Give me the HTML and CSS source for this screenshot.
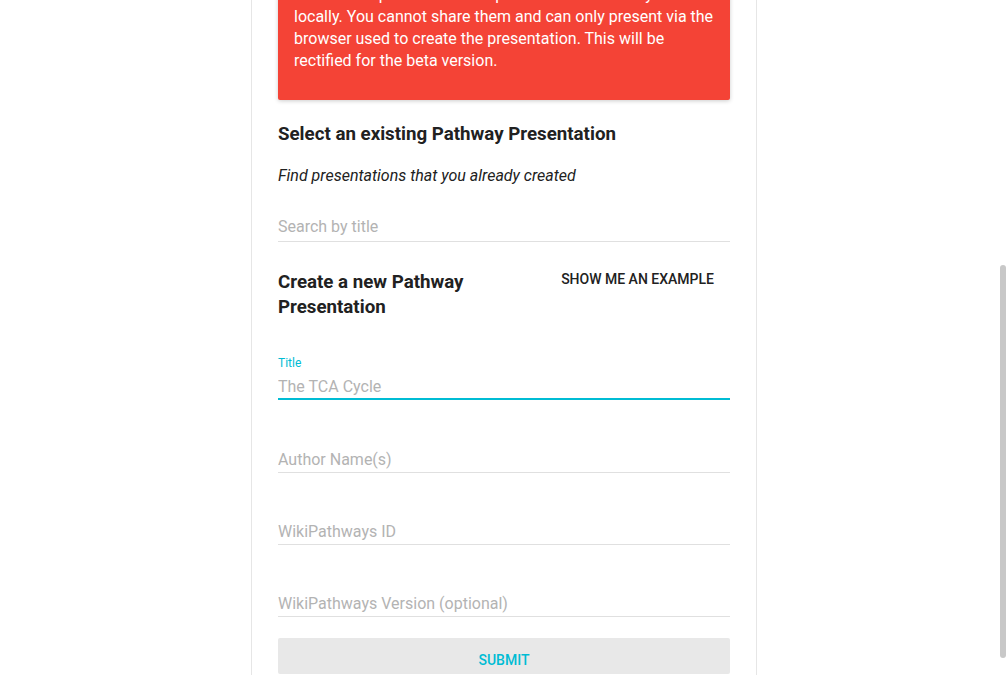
FILE: index.html
```html
<!DOCTYPE html>
<html lang="en">
<head>
<meta charset="utf-8">
<title>Pathway Presenter</title>
<link rel="stylesheet" href="styles.css">
</head>
<body>
<main class="card">
  <div class="alert">
    <p>This is an alpha version and presentations are only stored<br>locally. You cannot share them and can only present via the browser used to create the presentation. This will be rectified for the beta version.</p>
  </div>

  <h2 class="section-title">Select an existing Pathway Presentation</h2>
  <p class="hint">Find presentations that you already created</p>
  <div class="field search-field">
    <input type="text" placeholder="Search by title">
  </div>

  <div class="create-row">
    <h2 class="section-title create-title">Create a new Pathway Presentation</h2>
    <button class="example-btn" type="button">Show me an example</button>
  </div>

  <div class="title-field">
    <label class="float-label">Title</label>
    <input type="text" placeholder="The TCA Cycle">
  </div>
  <div class="field plain-field">
    <input type="text" placeholder="Author Name(s)">
  </div>
  <div class="field plain-field">
    <input type="text" placeholder="WikiPathways ID">
  </div>
  <div class="field plain-field">
    <input type="text" placeholder="WikiPathways Version (optional)">
  </div>

  <button class="submit-btn" type="button">Submit</button>
</main>
<div class="scroll-thumb"></div>
</body>
</html>
```

FILE: styles.css
```css
html, body {
  margin: 0;
  padding: 0;
  background: #ffffff;
  overflow: hidden;
  font-family: Roboto, "Liberation Sans", sans-serif;
  color: #212121;
}

.card {
  display: block;
  width: 452px;
  padding: 26px;
  margin: -59px auto 0;
  border: 1px solid #e6e6e6;
  background: #ffffff;
}

.alert {
  background: #f44336;
  color: #ffffff;
  border-radius: 2px;
  box-shadow: 0 1px 4px rgba(0, 0, 0, 0.2);
  padding: 16px 16px 28px;
  font-size: 16px;
  line-height: 22px;
}

.alert p {
  margin: 0;
}

.section-title {
  margin: 22px 0 0;
  font-size: 18.72px;
  line-height: 25px;
  font-weight: 700;
  color: #212121;
}

.hint {
  margin: 18px 0 0;
  font-style: italic;
  font-size: 16px;
  line-height: 22px;
  color: #212121;
}

input {
  display: block;
  width: 100%;
  height: 22px;
  padding: 0;
  margin: 0;
  border: none;
  outline: none;
  background: transparent;
  font-family: Roboto, "Liberation Sans", sans-serif;
  font-size: 16px;
  line-height: 22px;
  color: #212121;
}

input::placeholder {
  color: #b3b3b3;
  opacity: 1;
}

.field {
  border-bottom: 1px solid #e0e0e0;
}

.search-field {
  margin-top: 29px;
  padding-bottom: 3px;
}

.create-row {
  display: flex;
  justify-content: space-between;
  align-items: flex-start;
  margin-top: 19px;
}

.create-title {
  margin: 9px 0 0;
}

.example-btn {
  flex-shrink: 0;
  height: 36px;
  padding: 0 16px;
  border: none;
  background: transparent;
  font-family: Roboto, "Liberation Sans", sans-serif;
  font-size: 14px;
  font-weight: 500;
  line-height: 36px;
  text-transform: uppercase;
  color: #212121;
}

.title-field {
  margin-top: 35px;
  margin-bottom: 1px;
  border-bottom: 2px solid #00bcd4;
}

.float-label {
  display: block;
  font-size: 12px;
  line-height: 16px;
  color: #00bcd4;
}

.title-field input {
  margin-top: 5px;
}

.plain-field {
  padding-top: 48px;
  padding-bottom: 1px;
}

.submit-btn {
  display: block;
  width: 100%;
  height: 36px;
  margin-top: 21px;
  padding: 8px 0 0;
  border: none;
  border-radius: 2px;
  background: #e8e8e8;
  font-family: Roboto, "Liberation Sans", sans-serif;
  font-size: 14px;
  font-weight: 500;
  line-height: 28px;
  text-transform: uppercase;
  color: #00bcd4;
}

.scroll-thumb {
  position: fixed;
  top: 265px;
  right: 2px;
  width: 6px;
  height: 393px;
  border-radius: 3px;
  background: #c8c8c8;
}
```
